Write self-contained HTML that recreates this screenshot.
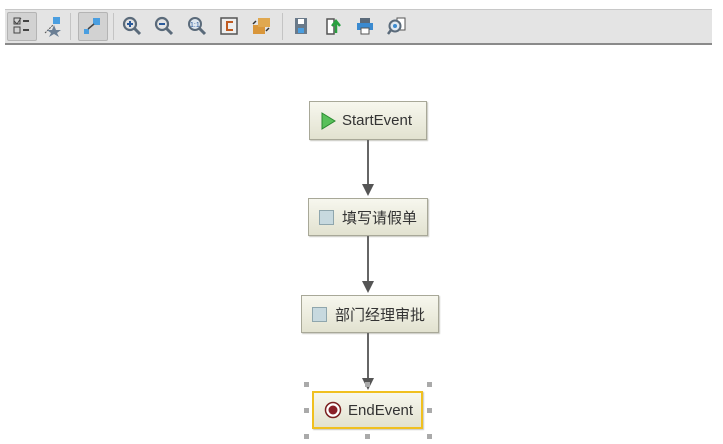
<!DOCTYPE html>
<html><head><meta charset="utf-8"><style>
body{margin:0;width:723px;height:444px;background:#fff;position:relative;overflow:hidden;font-family:"Liberation Sans","Noto Sans CJK SC",sans-serif}
.tb{position:absolute;left:5px;top:9px;width:707px;height:33px;background:#e4e4e4;border-top:1px solid #c8c8c8;border-bottom:2px solid #8a8a8a}
.ic{position:absolute;top:5px;width:22px;height:22px}
.sel{position:absolute;top:2px;width:28px;height:27px;background:#d2d2d2;border:1px solid #b4b4b4;border-radius:2px}
.sep{position:absolute;top:3px;width:1px;height:27px;background:#c4c4c4}
.box{position:absolute;height:36px;border:1px solid #a8a898;background:linear-gradient(#f7f7ee,#e2e2d0);box-shadow:1px 1px 1px #c8c8c0;font-size:15px;color:#333;display:flex;align-items:center;padding-left:10px;box-sizing:border-box}
.sq{width:13px;height:13px;background:#c7d9df;border:1px solid #8fa6ad;margin-right:8px}
.ln{position:absolute;left:367px;width:2px;background:#666}
.ar{position:absolute;left:362px;width:0;height:0;border-left:6px solid transparent;border-right:6px solid transparent;border-top:12px solid #555}
.h{position:absolute;width:5px;height:5px;background:#aaa}
</style></head><body>
<div class="tb">
 <div class="sel" style="left:2px"></div>
 <svg class="ic" style="left:6px" viewBox="0 0 22 22"><rect x="3" y="3" width="6" height="6" fill="none" stroke="#444"/><path d="M3 6l3 3 4-6" stroke="#444" fill="none"/><rect x="3" y="12" width="6" height="6" fill="none" stroke="#444"/><path d="M12 6h6M12 15h6" stroke="#444" stroke-width="2"/></svg>
 <svg class="ic" style="left:36px" viewBox="0 0 22 22"><rect x="12" y="2" width="7" height="7" fill="#4a9ee0"/><path d="M4 18L12 10" stroke="#555" stroke-dasharray="2 1"/><polygon points="13,10 15,15 20,15 16,18 18,22 13,19 8,22 10,18 6,15 11,15" fill="#6b7f95"/></svg>
 <div class="sep" style="left:65px"></div>
 <div class="sel" style="left:73px"></div>
 <svg class="ic" style="left:76px" viewBox="0 0 22 22"><rect x="12" y="3" width="7" height="7" fill="#4a9ee0"/><rect x="3" y="14" width="5" height="5" fill="#4a9ee0"/><path d="M7 14L13 9" stroke="#444" stroke-width="1.5"/></svg>
 <div class="sep" style="left:108px"></div>
 <svg class="ic" style="left:116px" viewBox="0 0 22 22"><circle cx="9" cy="9" r="6" fill="none" stroke="#5a6a7a" stroke-width="2.2"/><path d="M13 13l6 6" stroke="#5a6a7a" stroke-width="3"/><path d="M6 9h6M9 6v6" stroke="#2a5a9a" stroke-width="2"/></svg>
 <svg class="ic" style="left:148px" viewBox="0 0 22 22"><circle cx="9" cy="9" r="6" fill="none" stroke="#5a6a7a" stroke-width="2.2"/><path d="M13 13l6 6" stroke="#5a6a7a" stroke-width="3"/><path d="M6 9h6" stroke="#2a5a9a" stroke-width="2"/></svg>
 <svg class="ic" style="left:180px" viewBox="0 0 22 22"><circle cx="10" cy="9" r="6" fill="#dfe8f0" stroke="#5a6a7a" stroke-width="2"/><path d="M14 13l6 6" stroke="#5a6a7a" stroke-width="3"/><text x="5" y="12" font-size="7" fill="#2a5a9a">1:1</text></svg>
 <svg class="ic" style="left:213px" viewBox="0 0 22 22"><rect x="3" y="3" width="16" height="16" fill="#eee" stroke="#555" stroke-width="1.5"/><path d="M15 7h-6v8h6" fill="none" stroke="#c05a20" stroke-width="2"/></svg>
 <svg class="ic" style="left:245px" viewBox="0 0 22 22"><rect x="3" y="10" width="12" height="9" fill="#d9963a"/><rect x="8" y="3" width="12" height="9" fill="#e0a850"/><path d="M3 9l3-3M19 13l-3 3" stroke="#333" stroke-width="1.5"/></svg>
 <div class="sep" style="left:277px"></div>
 <svg class="ic" style="left:285px" viewBox="0 0 22 22"><rect x="5" y="3" width="12" height="16" fill="#6a7a8a"/><rect x="8" y="4" width="6" height="5" fill="#fff"/><rect x="8" y="13" width="6" height="5" fill="#4a9ee0"/></svg>
 <svg class="ic" style="left:317px" viewBox="0 0 22 22"><path d="M5 4h7v15H5z" fill="#fff" stroke="#555" stroke-width="1.5"/><path d="M14 18V8M10 11l4-5 4 5" stroke="#2aa040" stroke-width="2.5" fill="none"/></svg>
 <svg class="ic" style="left:349px" viewBox="0 0 22 22"><rect x="6" y="3" width="10" height="5" fill="#5a6a7a"/><rect x="3" y="8" width="16" height="7" fill="#3a8ad0"/><rect x="7" y="13" width="8" height="6" fill="#fff" stroke="#555"/></svg>
 <svg class="ic" style="left:381px" viewBox="0 0 22 22"><rect x="11" y="3" width="8" height="12" fill="#fff" stroke="#555"/><circle cx="9" cy="11" r="5.5" fill="#dfe8f0" stroke="#5a6a7a" stroke-width="2"/><circle cx="9" cy="11" r="2" fill="#3a8ad0"/><path d="M5 15l-3 4" stroke="#5a6a7a" stroke-width="2.5"/></svg>
</div>

<div class="box" style="left:309px;top:101px;width:118px;height:39px"><svg width="16" height="18" style="margin-right:6px"><polygon points="2,1 15,9 2,17" fill="#58c05a" stroke="#2a8a30"/></svg>StartEvent</div>
<div class="ln" style="top:140px;height:46px"></div><div class="ar" style="top:184px"></div>
<div class="box" style="left:308px;top:198px;width:120px;height:38px"><div class="sq"></div>填写请假单</div>
<div class="ln" style="top:236px;height:46px"></div><div class="ar" style="top:281px"></div>
<div class="box" style="left:301px;top:295px;width:138px;height:38px"><div class="sq"></div>部门经理审批</div>
<div class="ln" style="top:333px;height:46px"></div><div class="ar" style="top:378px"></div>
<div class="box" style="left:312px;top:391px;width:111px;height:38px;border:2px solid #f0c020"><svg width="18" height="18" style="margin-right:6px"><circle cx="9" cy="9" r="7.5" fill="#fff" stroke="#7a2020" stroke-width="1.5"/><circle cx="9" cy="9" r="4.5" fill="#8a2028"/></svg>EndEvent</div>
<div class="h" style="left:304px;top:382px"></div><div class="h" style="left:365px;top:382px"></div><div class="h" style="left:427px;top:382px"></div>
<div class="h" style="left:304px;top:408px"></div><div class="h" style="left:427px;top:408px"></div>
<div class="h" style="left:304px;top:434px"></div><div class="h" style="left:365px;top:434px"></div><div class="h" style="left:427px;top:434px"></div>
</body></html>
